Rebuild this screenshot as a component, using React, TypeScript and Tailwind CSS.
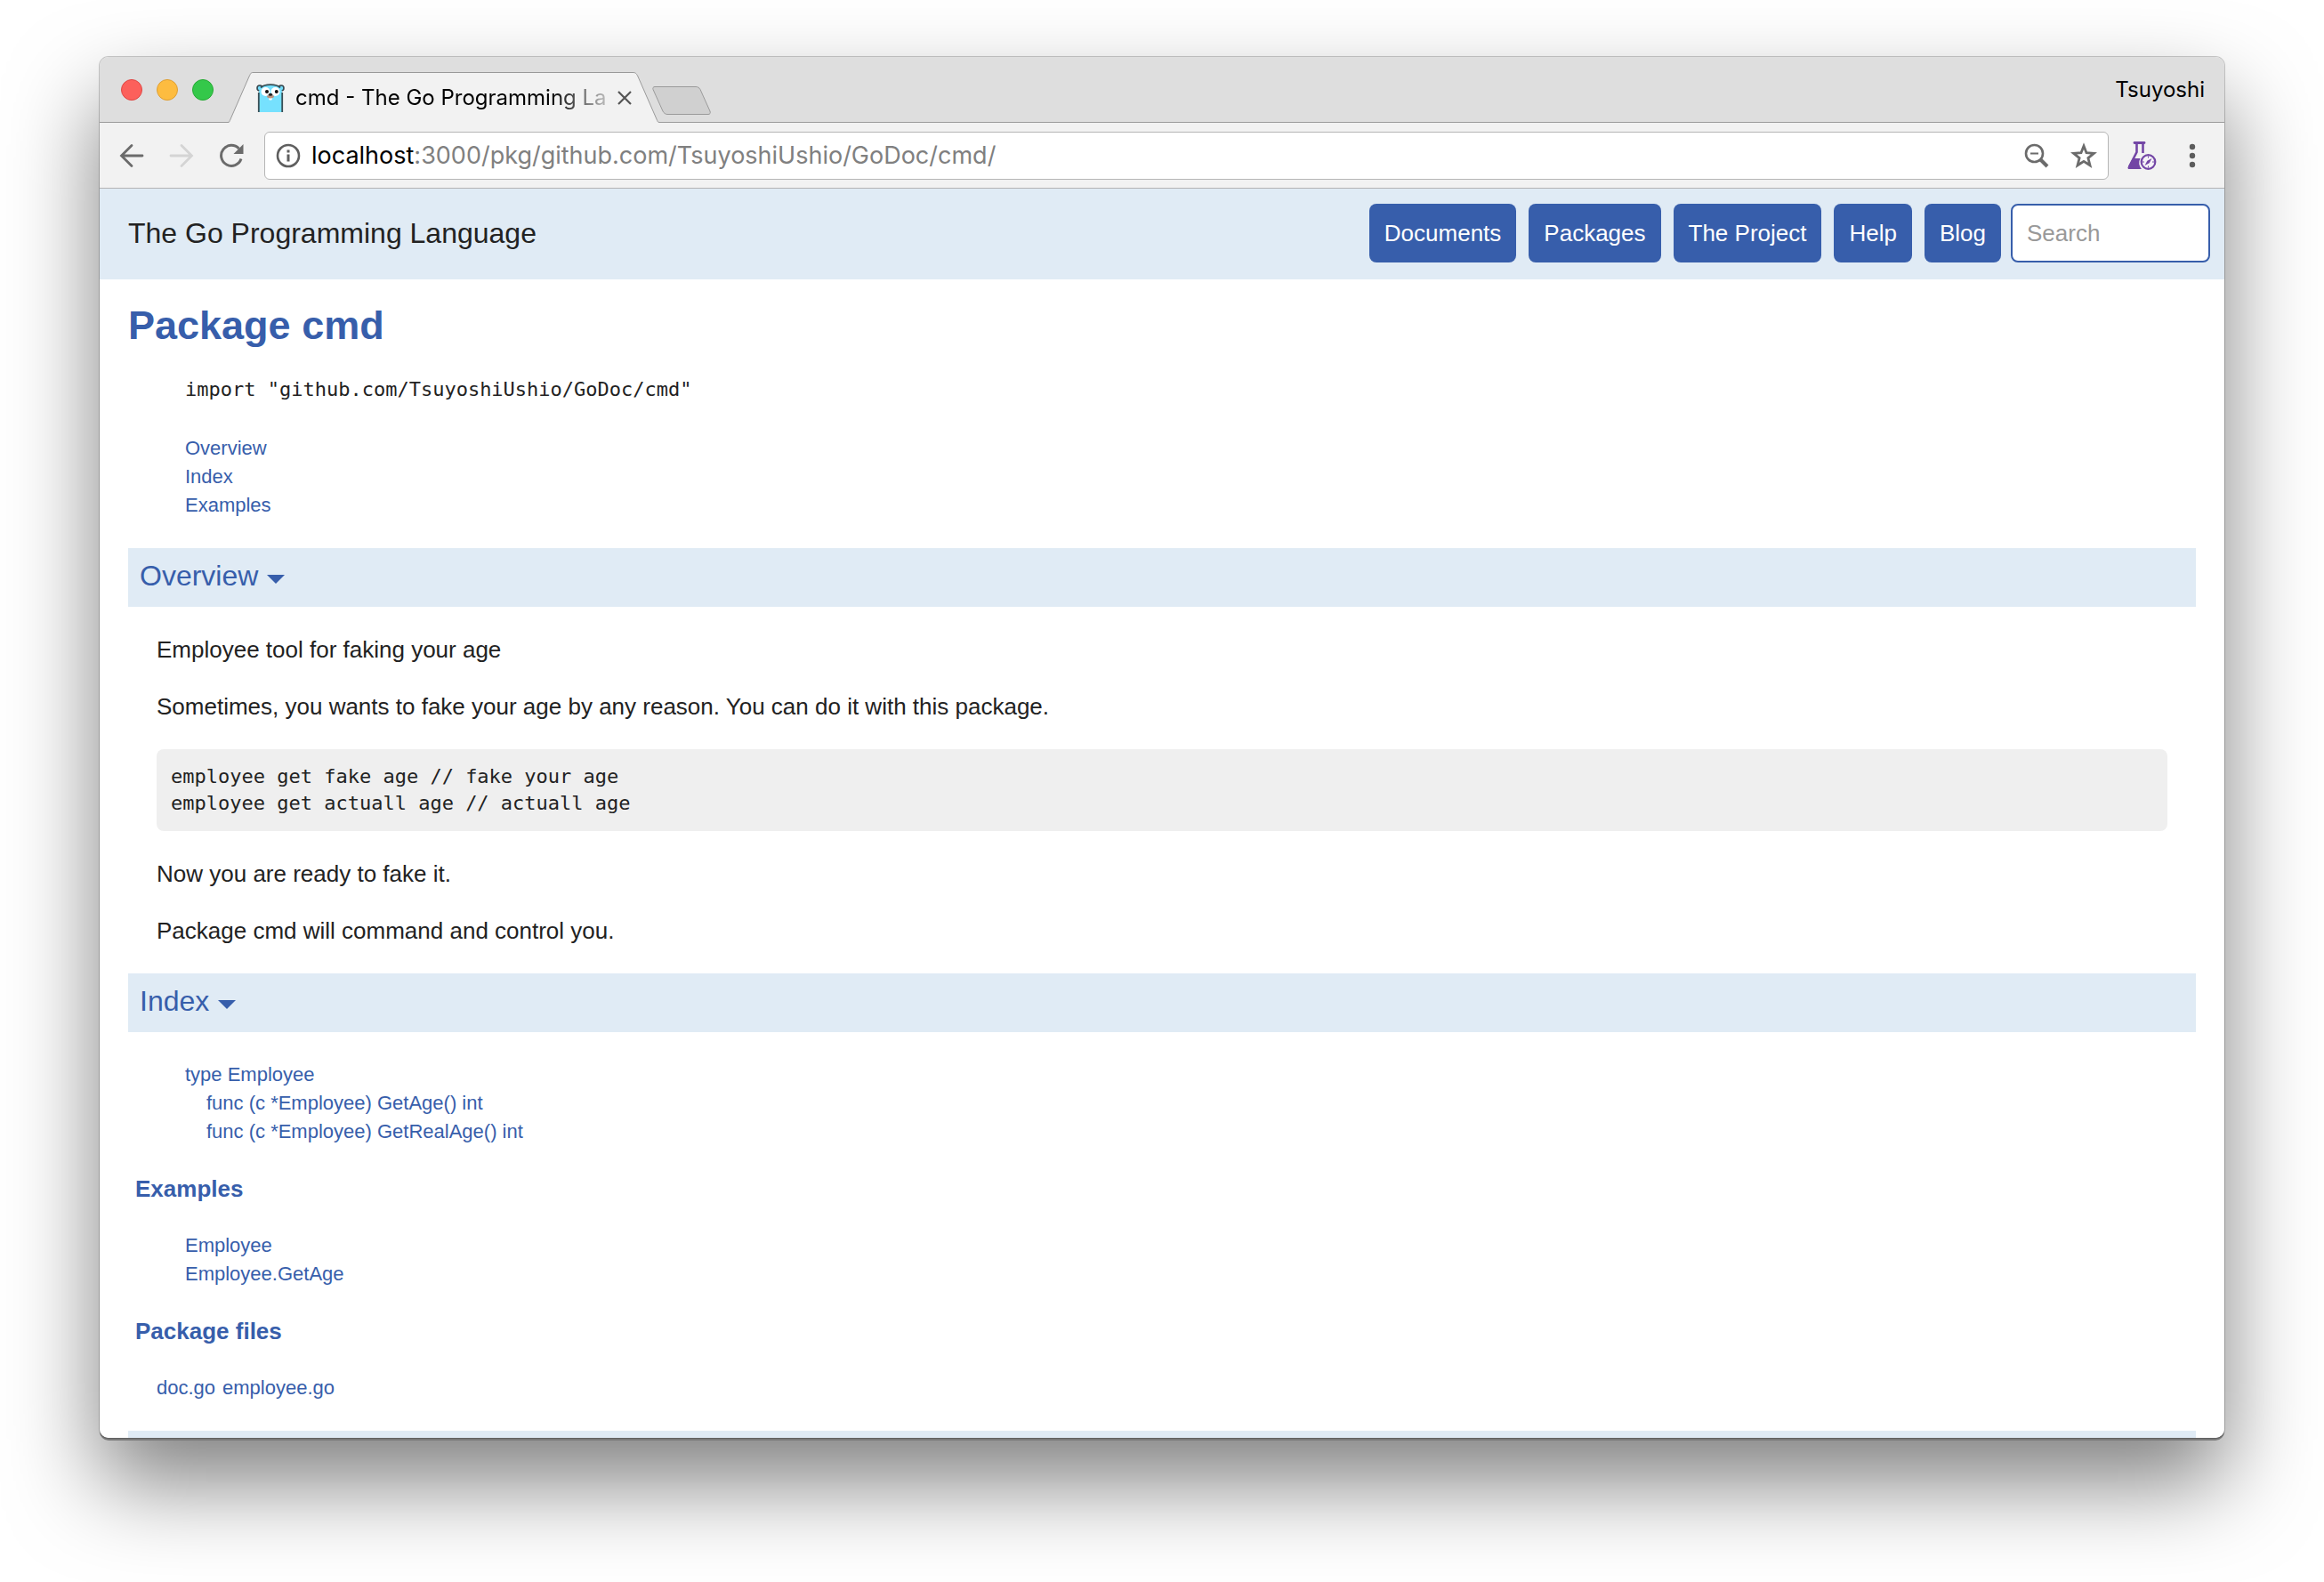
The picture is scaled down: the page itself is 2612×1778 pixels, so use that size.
import React, { useState } from 'react';

const navLinks = ['Documents', 'Packages', 'The Project', 'Help', 'Blog'];

const Gopher: React.FC = () => (
  <svg viewBox="0 0 32 32" className="w-8 h-8 shrink-0" aria-hidden="true">
    <circle cx="4" cy="5" r="3" fill="#74ddfb" stroke="#37474f" strokeWidth="1.6" />
    <circle cx="28" cy="5" r="3" fill="#74ddfb" stroke="#37474f" strokeWidth="1.6" />
    <path d="M2.8 32V11C2.8 4 8 1.200 16 1.200S29.200 4 29.200 11v21" fill="#76e1fe" />
    <path d="M2.8 32V10M29.200 32V10M5 4.500C7.500 2 11 1.200 16 1.200s8.500.8 11 3.300" fill="none" stroke="#384e54" strokeWidth="1.800" />
    <circle cx="10.500" cy="9" r="5" fill="#fff" />
    <circle cx="21.500" cy="9" r="5" fill="#fff" />
    <circle cx="12" cy="9" r="2" fill="#111" />
    <circle cx="22.800" cy="9" r="2" fill="#111" />
    <rect x="14.200" y="15" width="3.600" height="3.600" rx="1" fill="#fff" />
    <ellipse cx="16" cy="14.600" rx="4" ry="1.800" fill="#b8937f" />
    <ellipse cx="16" cy="12.300" rx="2.200" ry="1.500" fill="#222" />
  </svg>
);

const FlaskIcon: React.FC = () => (
  <svg viewBox="0 0 34 34" className="w-[34px] h-[34px]" fill="none" stroke="#7346a5" aria-hidden="true">
    <path d="M9 2.500h11" strokeWidth="2.800" strokeLinecap="round" />
    <path d="M11.500 3v10L3 29.500M18.500 3v11" strokeWidth="2.600" />
    <path d="M7 20h8.500a10 10 0 0 0 1.500 12H3.500c-2 0-2.500-1.200-1.700-2.600z" fill="#7346a5" stroke="none" />
    <circle cx="24.500" cy="24" r="7.800" strokeWidth="2.200" fill="#f5f2f8" />
    <path d="M28.500 20l-2.800 5.200-5.200 2.800 2.800-5.200z" fill="#7346a5" stroke="none" />
    <path d="M24.500 17.500v2M24.500 28.500v2M18 24h2M29 24h2" strokeWidth="1" />
  </svg>
);

const TitleBar: React.FC = () => (
  <div className="flex items-end justify-between shrink-0 h-[74px] bg-[#dedede] border-b border-[#9b9b9b] pl-6">
    <div className="flex items-end h-full">
      <div className="flex items-center gap-4 h-full">
        <button aria-label="Close window" className="w-6 h-6 rounded-full bg-[#fc605b] border border-[#df4744]" />
        <button aria-label="Minimize window" className="w-6 h-6 rounded-full bg-[#fdbc40] border border-[#de9f34]" />
        <button aria-label="Zoom window" className="w-6 h-6 rounded-full bg-[#34c84a] border border-[#27aa35]" />
      </div>
      <div className="relative flex items-center w-[485px] h-[57px] ml-4 -mb-px pl-8 pr-[34px]">
        <svg viewBox="0 0 485 57" className="absolute inset-0 w-full h-full" aria-hidden="true">
          <path d="M0 57C2 57 2 55 3 53L24 5C26 1 26 .5 29 .5H455C458 .5 459 1 461 5L482 53C483 55 483 56.500 485 56.500V57z" fill="#f2f2f2" />
          <path d="M0 56.500C2 56.500 2 55 3 53L24 5C26 1 26 .5 29 .5H455C458 .5 459 1 461 5L482 53C483 55 483 56.500 485 56.500" fill="none" stroke="#999" />
        </svg>
        <div className="relative flex items-center gap-3 grow min-w-0">
          <Gopher />
          <span className="grow whitespace-nowrap text-2xl text-black [mask-image:linear-gradient(to_right,black_82%,transparent_105%)]">
            cmd - The Go Programming La
          </span>
          <button aria-label="Close tab" className="shrink-0">
            <svg viewBox="0 0 16 16" className="w-4 h-4" stroke="#555" strokeWidth="2.200" aria-hidden="true">
              <path d="M1 1l14 14M15 1L1 15" />
            </svg>
          </button>
        </div>
      </div>
      <button aria-label="New tab" className="-ml-2 mb-2">
        <svg viewBox="0 0 66 32" className="w-[66px] h-8" aria-hidden="true">
          <path d="M3 .5H49C51 .5 53 1.500 54 3.500L65 28C65.800 30 65 31.500 63 31.500H17C15 31.500 13 30 12 28L1 3.500C.5 2 1 .5 3 .5z" fill="#d0d0d0" stroke="#9a9a9a" />
        </svg>
      </button>
    </div>
    <span className="self-center pr-[22px] text-2xl text-black">Tsuyoshi</span>
  </div>
);

const Toolbar: React.FC = () => (
  <div className="flex items-center shrink-0 h-[74px] bg-[#f2f2f2] border-b border-[#b3b3b3] pl-[22px] pr-7">
    <div className="flex items-center gap-7">
      <button aria-label="Back">
        <svg viewBox="0 0 28 28" className="w-7 h-7" fill="none" stroke="#6b6b6b" strokeWidth="2.800" strokeLinecap="round" aria-hidden="true">
          <path d="M26 14H3M14 2.500L2.500 14 14 25.500" />
        </svg>
      </button>
      <button aria-label="Forward">
        <svg viewBox="0 0 28 28" className="w-7 h-7" fill="none" stroke="#d4d4d4" strokeWidth="2.800" strokeLinecap="round" aria-hidden="true">
          <path d="M2 14h23M14 2.500L25.500 14 14 25.500" />
        </svg>
      </button>
      <button aria-label="Reload">
        <svg viewBox="0 0 28 28" className="w-7 h-7" fill="none" stroke="#6b6b6b" strokeWidth="3" aria-hidden="true">
          <path d="M25 17.500A11.500 11.500 0 1 1 22.500 6" />
          <path d="M27.500 1v11h-11z" fill="#6b6b6b" stroke="none" />
        </svg>
      </button>
    </div>
    <div className="flex items-center grow h-[54px] ml-[23px] px-3 bg-white border border-[#b5b5b5] rounded-md">
      <svg viewBox="0 0 28 28" className="w-7 h-7" fill="none" stroke="#5f5f5f" strokeWidth="2.600" aria-hidden="true">
        <circle cx="14" cy="14" r="12" />
        <path d="M14 12.500v8M14 7.500v3" strokeWidth="3" />
      </svg>
      <p className="grow ml-3 text-[27px] leading-8 text-[#808080]">
        <span className="text-black">localhost</span>:3000/pkg/github.com/TsuyoshiUshio/GoDoc/cmd/
      </p>
      <div className="flex items-center gap-6">
        <button aria-label="Zoom out">
          <svg viewBox="0 0 28 28" className="w-7 h-7" fill="none" stroke="#6b6b6b" aria-hidden="true">
            <circle cx="11.500" cy="11.500" r="9.500" strokeWidth="2.600" />
            <path d="M7 11.500h9" strokeWidth="2" />
            <path d="M18 18l8 8" strokeWidth="4" />
          </svg>
        </button>
        <button aria-label="Bookmark this page">
          <svg viewBox="0 0 30 30" className="w-[30px] h-[30px]" fill="none" stroke="#6b6b6b" strokeWidth="2.800" aria-hidden="true">
            <path d="M15 4l3 7.700 8.400.6-6.500 5.300 2.100 8.200L15 21.300l-7 4.500 2.100-8.200-6.500-5.300 8.400-.6z" />
          </svg>
        </button>
      </div>
    </div>
    <button aria-label="Extension" className="ml-5">
      <FlaskIcon />
    </button>
    <button aria-label="Menu" className="ml-8">
      <svg viewBox="0 0 16 28" className="w-4 h-7" fill="#5c5c5c" aria-hidden="true">
        <circle cx="8" cy="4" r="3.200" />
        <circle cx="8" cy="14" r="3.200" />
        <circle cx="8" cy="24" r="3.200" />
      </svg>
    </button>
  </div>
);

const Section: React.FC<{ title: string; children?: React.ReactNode }> = ({ title, children }) => {
  const [open, setOpen] = useState(true);
  return (
    <section>
      <h2 className="bg-[#e0ebf5]">
        <button
          onClick={() => setOpen(!open)}
          aria-expanded={open}
          className="flex items-center gap-2.5 w-full h-[66px] px-[13px] pb-1 text-[32px] text-[#375eab]"
        >
          {title}
          <svg viewBox="0 0 20 10" className="w-5 h-2.5 mt-2" fill="#375eab" aria-hidden="true">
            <path d="M0 0h20L10 10z" />
          </svg>
        </button>
      </h2>
      {open && <div className="flex flex-col gap-8 py-8">{children}</div>}
    </section>
  );
};

const DocLink: React.FC<{ children: React.ReactNode }> = ({ children }) => (
  <a href="#" className="text-[22px] leading-8 text-[#375eab]">
    {children}
  </a>
);

const SubHeading: React.FC<{ children: React.ReactNode }> = ({ children }) => (
  <h3 className="pl-2 text-[26px] leading-8 font-bold text-[#375eab]">{children}</h3>
);

const GoDocPage: React.FC = () => (
  <div className="grow min-h-0 overflow-hidden bg-white font-['Liberation_Sans',Arial,sans-serif] text-[26px] leading-8 text-[#222]">
    <header className="flex items-center justify-between pl-8 pr-4 pt-[17px] pb-[19px] bg-[#e0ebf5]">
      <a href="#" className="text-[32px] text-[#222]">The Go Programming Language</a>
      <div className="flex items-center gap-[11px]">
        <nav className="flex gap-3.5">
          {navLinks.map((label) => (
            <a key={label} href="#" className="px-[17px] py-[17px] rounded-lg bg-[#375eab] text-white">
              {label}
            </a>
          ))}
        </nav>
        <input
          type="text"
          aria-label="Search"
          placeholder="Search"
          className="w-56 h-[66px] px-4 bg-white border-2 border-[#375eab] rounded-lg placeholder:text-[#999]"
        />
      </div>
    </header>

    <main className="px-8 pt-5">
      <h1 className="text-[45px] leading-[64px] font-bold text-[#375eab]">Package cmd</h1>
      <div className="pl-16 pt-6 pb-8">
        <code className="block pb-[34px] font-['DejaVu_Sans_Mono',Menlo,monospace] text-[22px] leading-8">
          import "github.com/TsuyoshiUshio/GoDoc/cmd"
        </code>
        <ul className="flex flex-col">
          <li className="flex"><DocLink>Overview</DocLink></li>
          <li className="flex"><DocLink>Index</DocLink></li>
          <li className="flex"><DocLink>Examples</DocLink></li>
        </ul>
      </div>

      <Section title="Overview">
        <p className="px-8">Employee tool for faking your age</p>
        <p className="px-8">Sometimes, you wants to fake your age by any reason. You can do it with this package.</p>
        <pre className="mx-8 p-4 rounded-lg bg-[#efefef] font-['DejaVu_Sans_Mono',Menlo,monospace] text-[22px] leading-[30px]">
          {'employee get fake age // fake your age\nemployee get actuall age // actuall age'}
        </pre>
        <p className="px-8">Now you are ready to fake it.</p>
        <p className="px-8">Package cmd will command and control you.</p>
      </Section>

      <Section title="Index">
        <ul className="pl-16">
          <li className="flex"><DocLink>type Employee</DocLink></li>
          <li className="flex pl-6"><DocLink>func (c *Employee) GetAge() int</DocLink></li>
          <li className="flex pl-6"><DocLink>func (c *Employee) GetRealAge() int</DocLink></li>
        </ul>
        <SubHeading>Examples</SubHeading>
        <ul className="pl-16">
          <li className="flex"><DocLink>Employee</DocLink></li>
          <li className="flex"><DocLink>Employee.GetAge</DocLink></li>
        </ul>
        <SubHeading>Package files</SubHeading>
        <p className="flex gap-2 px-8">
          <DocLink>doc.go</DocLink>
          <DocLink>employee.go</DocLink>
        </p>
      </Section>

      <div className="h-[66px] bg-[#e0ebf5]" />
    </main>
  </div>
);

const App: React.FC = () => (
  <div className="flex flex-col h-screen overflow-hidden bg-white px-28 pt-16 pb-[162px] font-[Inter,Roboto,sans-serif]">
    <div className="flex flex-col grow min-h-0 overflow-hidden rounded-[10px] shadow-[0_0_0_1px_rgba(0,0,0,0.2),0_3px_0_#7a7a7a,0_50px_100px_rgba(0,0,0,0.5)]">
      <TitleBar />
      <Toolbar />
      <GoDocPage />
    </div>
  </div>
);

export default App;
